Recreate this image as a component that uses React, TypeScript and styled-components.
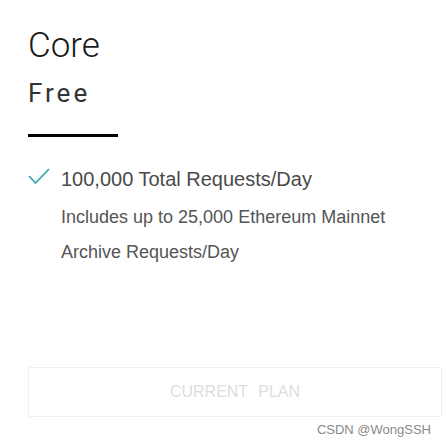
import React from "react";
import styled, { createGlobalStyle } from "styled-components";

const GlobalStyle = createGlobalStyle`
  html, body {
    margin: 0;
    padding: 0;
    background: #ffffff;
  }
  body {
    font-family: "Liberation Sans", Arial, sans-serif;
  }
`;

const Card = styled.div`
  position: relative;
  width: 446px;
  height: 445px;
  box-sizing: border-box;
  padding: 26px 4px 0 28px;
  overflow: hidden;
`;

const PlanName = styled.h2`
  margin: 0;
  font-family: Roboto, "Liberation Sans", sans-serif;
  font-size: 35px;
  font-weight: 300;
  line-height: 40px;
  color: #1a1a1a;
`;

const PlanPrice = styled.div`
  margin-top: 12px;
  font-family: Roboto, "Liberation Sans", sans-serif;
  font-size: 26px;
  font-weight: 400;
  letter-spacing: 3px;
  line-height: 30px;
  color: #333333;
`;

const Divider = styled.div`
  width: 90px;
  height: 3px;
  margin-top: 26px;
  background: #000000;
`;

const FeatureList = styled.ul`
  list-style: none;
  margin: 29px 0 0;
  padding: 0;
`;

const FeatureRow = styled.li`
  display: grid;
  grid-template-columns: 33px 1fr;
  align-items: start;
`;

const CheckMark = styled.svg`
  width: 22px;
  height: 16px;
  margin-top: 2px;
`;

const FeatureTitle = styled.div`
  font-size: 20px;
  line-height: 26px;
  color: #4a4a4a;
`;

const FeatureNote = styled.div`
  grid-column: 2;
  margin-top: 8px;
  font-size: 18px;
  line-height: 35px;
  color: #555555;
`;

const PlanButton = styled.button`
  display: block;
  width: 100%;
  height: 50px;
  margin-top: 97px;
  background: #ffffff;
  border: 1px solid #efefef;
  border-radius: 2px;
  font-family: "Liberation Sans", Arial, sans-serif;
  font-size: 16px;
  word-spacing: 6px;
  color: #dedede;
  cursor: default;
`;

const Watermark = styled.span`
  position: absolute;
  right: 15px;
  bottom: 8px;
  font-family: "Liberation Sans", Arial, sans-serif;
  font-size: 13px;
  color: #8a8a8a;
`;

const App: React.FC = () => {
  return (
    <>
      <GlobalStyle />
      <Card>
        <PlanName>Core</PlanName>
        <PlanPrice>Free</PlanPrice>
        <Divider />
        <FeatureList>
          <FeatureRow>
            <CheckMark viewBox="0 0 22 16">
              <path d="M1 8 L7.5 15 L21 1" fill="none" stroke="#3ea6b3" strokeWidth="1.8" />
            </CheckMark>
            <FeatureTitle>100,000 Total Requests/Day</FeatureTitle>
            <FeatureNote>
              Includes up to 25,000 Ethereum Mainnet
              <br />
              Archive Requests/Day
            </FeatureNote>
          </FeatureRow>
        </FeatureList>
        <PlanButton type="button">CURRENT PLAN</PlanButton>
        <Watermark>CSDN @WongSSH</Watermark>
      </Card>
    </>
  );
};

export default App;
